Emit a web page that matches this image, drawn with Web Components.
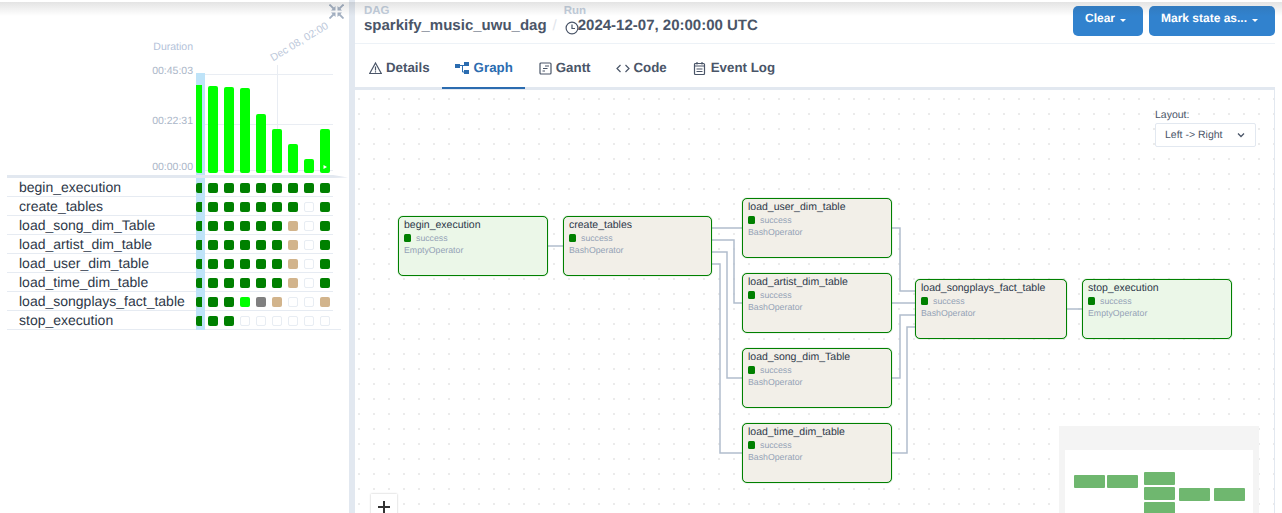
<!DOCTYPE html>
<html>
<head>
<meta charset="utf-8">
<style>
html, body { margin: 0; height: 513px; overflow: hidden; background: #fff; }
body { font-family: "Liberation Sans", Arial, sans-serif; color: #2d3748; text-rendering: geometricPrecision; }
</style>
</head>
<body>
<dag-page></dag-page>
<script>
const FONT = `"Liberation Sans", Arial, sans-serif`;

const tasks = [
  ["begin_execution", "g g g g g g g g"],
  ["create_tables", "g g g g g g e g"],
  ["load_song_dim_Table", "g g g g g t e g"],
  ["load_artist_dim_table", "g g g g g t e g"],
  ["load_user_dim_table", "g g g g g t e g"],
  ["load_time_dim_table", "g g g g g t e g"],
  ["load_songplays_fact_table", "g g l x t e e t"],
  ["stop_execution", "g g e e e e e e"],
];

const nodes = [
  ["begin_execution", "EmptyOperator", 398, 216, 150],
  ["create_tables", "BashOperator", 563, 216, 149],
  ["load_user_dim_table", "BashOperator", 742, 198, 150],
  ["load_artist_dim_table", "BashOperator", 742, 273, 150],
  ["load_song_dim_Table", "BashOperator", 742, 348, 150],
  ["load_time_dim_table", "BashOperator", 742, 423, 150],
  ["load_songplays_fact_table", "BashOperator", 915, 279, 152],
  ["stop_execution", "EmptyOperator", 1082, 279, 150],
];

const edges = [
  "M548 246H563",
  "M712 228H742",
  "M712 240H734V303H742",
  "M712 252H727V378H742",
  "M712 264H720V453H742",
  "M892 228H900V291H915",
  "M892 303H915",
  "M892 378H900V315H915",
  "M892 453H907V327H915",
  "M1067 309H1082",
];

class DurationChart extends HTMLElement {
  constructor() {
    super();
    this.attachShadow({ mode: "open" });
    const tops = [86, 87, 88, 114, 129, 144, 159, 129];
    const bars = tops
      .map((y, i) => `<rect x="${208 + i * 16}" y="${y}" width="10" height="${173 - y}" rx="2" fill="#00ff00"/>`)
      .join("");
    this.shadowRoot.innerHTML = `
      <style>
        :host { display: block; height: 178px; }
        svg { display: block; }
        text { font-family: ${FONT}; font-size: 10.5px; fill: #aab6c8; }
      </style>
      <svg width="349" height="178" viewBox="0 0 349 178">
        <rect x="196" y="73" width="9" height="105" fill="#bee3f8"/>
        <path d="M205 74.5H333M205 124.500H333M205 170.500H333M277.500 65V170" stroke="#e9edf3" stroke-width="1" fill="none"/>
        <text x="193" y="50" text-anchor="end" style="fill:#b3c2d9">Duration</text>
        <text x="193" y="74" text-anchor="end">00:45:03</text>
        <text x="193" y="124" text-anchor="end">00:22:31</text>
        <text x="193" y="170" text-anchor="end">00:00:00</text>
        <text transform="translate(273 61.500) rotate(-31)" style="font-size:10.500px;fill:#bcc8da">Dec 08, 02:00</text>
        <path d="M196 85h6v88h-4a2 2 0 0 1-2-2z" fill="#00ff00"/>
        ${bars}
        <path d="M323.500 165v4l3.500-2z" fill="#fff"/>
        <path d="M7 175H333L348 177.500L333 178H7z" fill="#e2e8f0"/>
      </svg>`;
  }
}

class TaskRow extends HTMLElement {
  constructor() {
    super();
    this.attachShadow({ mode: "open" });
    this.shadowRoot.innerHTML = `
      <style>
        :host { display: flex; box-sizing: border-box; height: 19px; width: 326px; border-bottom: 1px solid #e6ebf2; }
        .name { width: 177px; padding-left: 12px; font-size: 14px; line-height: 18px; color: #2d3748; white-space: nowrap; }
        .now { width: 9px; height: 19px; background: #bee3f8; overflow: hidden; flex: none; }
        .now i { display: block; width: 6px; height: 10px; margin-top: 5px; background: #008000; border-radius: 2px 0 0 2px; }
        .cells { display: flex; gap: 6px; margin-left: 3px; padding-top: 5px; }
        .cells i { box-sizing: border-box; display: block; width: 10px; height: 10px; border-radius: 2px; }
        .g { background: #008000; }
        .t { background: #d2b48c; }
        .l { background: #00ff00; }
        .x { background: #808080; }
        .e { background: #fff; border: 1px solid #e8edf3; }
      </style>
      <div class="name"></div>
      <div class="now"><i></i></div>
      <div class="cells"></div>`;
  }
  connectedCallback() {
    this.shadowRoot.querySelector(".name").textContent = this.getAttribute("name");
    this.shadowRoot.querySelector(".cells").innerHTML = this.getAttribute("states")
      .split(" ")
      .map((s) => `<i class="${s}"></i>`)
      .join("");
  }
}

class GridPanel extends HTMLElement {
  constructor() {
    super();
    this.attachShadow({ mode: "open" });
    this.shadowRoot.innerHTML = `
      <style>
        :host { display: block; width: 349px; flex: none; }
        .rows { margin-left: 7px; }
        task-row:last-child { width: 334px; }
        svg { position: absolute; left: 329px; top: 4px; }
      </style>
      <svg width="15" height="15" viewBox="0 0 15 15" fill="#a3b0c2" stroke="#a3b0c2">
        <path d="M6.500 6.500V2L2 6.500z" stroke="none"/><path d="M0.500 0.500L4.500 4.500" stroke-width="1.800"/>
        <path d="M8.500 6.500V2L13 6.500z" stroke="none"/><path d="M14.500 0.500L10.500 4.500" stroke-width="1.800"/>
        <path d="M6.500 8.500V13L2 8.500z" stroke="none"/><path d="M0.500 14.500L4.500 10.500" stroke-width="1.800"/>
        <path d="M8.500 8.500V13L13 8.500z" stroke="none"/><path d="M14.500 14.500L10.500 10.500" stroke-width="1.800"/>
      </svg>
      <duration-chart></duration-chart>
      <div class="rows"></div>`;
    this.shadowRoot.querySelector(".rows").innerHTML = tasks
      .map(([n, s]) => `<task-row name="${n}" states="${s}"></task-row>`)
      .join("");
  }
}

class DagHeader extends HTMLElement {
  constructor() {
    super();
    this.attachShadow({ mode: "open" });
    this.shadowRoot.innerHTML = `
      <style>
        :host { display: flex; box-sizing: border-box; height: 44px; padding: 4px 0 0 9px; border-bottom: 1px solid #edf2f7; justify-content: space-between; }
        .title { display: flex; }
        .label { font-size: 11.500px; font-weight: 700; line-height: 14px; color: #c3cedc; }
        .value { font-size: 15px; font-weight: 700; line-height: 15px; color: #4a5568; display: flex; align-items: flex-start; white-space: nowrap; }
        .sep { font-size: 15px; color: #dfe5ec; margin: 14px 7px 0 6px; line-height: 15px; }
        .value svg { margin: 3px -1px 0 1px; }
        .actions { display: flex; gap: 6px; padding-top: 2px; }
      </style>
      <div class="title">
        <div>
          <div class="label">DAG</div>
          <div class="value">sparkify_music_uwu_dag</div>
        </div>
        <div class="sep">/</div>
        <div>
          <div class="label">Run</div>
          <div class="value">
            <svg width="14" height="14" viewBox="0 0 14 14" fill="none" stroke="#4a5568" stroke-width="1.200"><circle cx="7" cy="7" r="5.900"/><path d="M7 3.500V7.500H10"/></svg>2024-12-07, 20:00:00 UTC
          </div>
        </div>
      </div>
      <div class="actions">
        <menu-button style="width:70px">Clear</menu-button>
        <menu-button style="width:126px">Mark state as...</menu-button>
      </div>`;
  }
}

class MenuButton extends HTMLElement {
  constructor() {
    super();
    this.attachShadow({ mode: "open" });
    this.shadowRoot.innerHTML = `
      <style>
        :host { display: flex; box-sizing: border-box; height: 30px; padding-right: 5px; background: #3182ce; border-radius: 5px; color: #fff; font-size: 12px; font-weight: 700; align-items: flex-start; justify-content: center; line-height: 25px; gap: 5px; }
        i { display: block; margin-top: 13px; border: 3px solid transparent; border-top-color: #fff; border-bottom: 0; }
      </style>
      <slot></slot><i></i>`;
  }
}

class TabItem extends HTMLElement {
  constructor() {
    super();
    this.attachShadow({ mode: "open" });
    this.shadowRoot.innerHTML = `
      <style>
        :host { display: flex; box-sizing: border-box; height: 45px; margin-bottom: -2px; padding: 3px 12px 0 13px; align-items: center; gap: 4px; font-size: 13.300px; font-weight: 700; color: #4a5568; border-bottom: 2px solid transparent; }
        :host([active]) { color: #2b6cb0; border-bottom-color: #2b6cb0; }
        ::slotted(svg) { display: block; margin-top: 2px; }
      </style>
      <slot name="icon"></slot><slot></slot>`;
  }
}

class TabBar extends HTMLElement {
  constructor() {
    super();
    this.attachShadow({ mode: "open" });
    this.shadowRoot.innerHTML = `
      <style>
        :host { display: flex; height: 43px; padding-left: 1px; border-bottom: 3px solid #e2e8f0; }
      </style>
      <slot></slot>`;
  }
}

class TaskNode extends HTMLElement {
  constructor() {
    super();
    this.attachShadow({ mode: "open" });
    this.shadowRoot.innerHTML = `
      <style>
        :host { display: block; position: absolute; box-sizing: border-box; height: 60px; padding: 2px 5px 0; border: 1px solid #008000; border-radius: 5px; box-shadow: 0 0 1px rgba(0,128,0,.7); background: #f2efe8; white-space: nowrap; }
        :host([empty]) { background: #ebf7e8; }
        .name { font-size: 10.500px; line-height: 13px; color: #2d3748; }
        .state { display: flex; align-items: center; gap: 5px; height: 12px; font-size: 8.750px; color: #94a2b6; }
        .state i { display: block; width: 7px; height: 8px; border-radius: 1.500px; background: #008000; }
        .op { font-size: 8.750px; line-height: 12px; color: #94a2b6; }
      </style>
      <div class="name"></div>
      <div class="state"><i></i><span>success</span></div>
      <div class="op"></div>`;
  }
  connectedCallback() {
    this.shadowRoot.querySelector(".name").textContent = this.getAttribute("name");
    this.shadowRoot.querySelector(".op").textContent = this.getAttribute("op");
  }
}

class LayoutSelect extends HTMLElement {
  constructor() {
    super();
    this.attachShadow({ mode: "open" });
    this.shadowRoot.innerHTML = `
      <style>
        :host { display: block; position: absolute; right: 18px; top: 19px; width: 101px; font-size: 10.500px; color: #4a5568; }
        .box { display: flex; box-sizing: border-box; height: 24px; margin-top: 2px; padding: 0 10px 0 9px; align-items: center; justify-content: space-between; background: #fff; border: 1px solid #e2e8f0; border-radius: 2px; }
      </style>
      <div>Layout:</div>
      <div class="box"><span>Left -&gt; Right</span>
        <svg width="8" height="6" viewBox="0 0 8 6" fill="none" stroke="#4a5568" stroke-width="1.300"><path d="M1 1.500L4 4.500L7 1.500"/></svg>
      </div>`;
  }
}

class MiniMap extends HTMLElement {
  constructor() {
    super();
    this.attachShadow({ mode: "open" });
    const boxes = [[1074, 475], [1107, 475], [1144, 472], [1144, 487], [1144, 502], [1179, 488], [1214, 488]];
    this.shadowRoot.innerHTML = `
      <style>
        :host { display: block; position: absolute; right: 15px; bottom: -60px; }
        svg { display: block; }
      </style>
      <svg width="200" height="147" viewBox="1059 426 200 147">
        <rect x="1059" y="426" width="200" height="147" fill="#f4f4f4"/>
        <rect x="1065" y="450" width="188" height="123" fill="#fff"/>
        ${boxes.map(([x, y]) => `<rect x="${x}" y="${y}" width="31" height="13" rx="1" fill="#6fb76f"/>`).join("")}
      </svg>`;
  }
}

class ZoomButton extends HTMLElement {
  constructor() {
    super();
    this.attachShadow({ mode: "open" });
    this.shadowRoot.innerHTML = `
      <style>
        :host { display: flex; position: absolute; left: 16px; top: 404px; box-sizing: border-box; width: 26px; height: 26px; align-items: center; justify-content: center; background: #fff; box-shadow: 0 0 2px rgba(0,0,0,.25); }
      </style>
      <svg width="12" height="12" viewBox="0 0 12 12" stroke="#333" stroke-width="2"><path d="M0 6H12M6 0V12"/></svg>`;
  }
}

class GraphCanvas extends HTMLElement {
  constructor() {
    super();
    this.attachShadow({ mode: "open" });
    const items = nodes
      .map(([n, op, x, y, w]) =>
        `<task-node name="${n}" op="${op}" ${op === "EmptyOperator" ? "empty" : ""} style="left:${x - 355}px;top:${y - 90}px;width:${w}px"></task-node>`)
      .join("");
    this.shadowRoot.innerHTML = `
      <style>
        :host { display: block; position: relative; flex: 1; overflow: hidden; border-right: 1px solid #e2e8f0;
          background-image: radial-gradient(circle at 1px 1px, #ebebeb 1px, transparent 1px);
          background-size: 15px 15px; background-position: 3px 8px; }
        svg.edges { position: absolute; left: 0; top: 0; }
      </style>
      <svg class="edges" width="920" height="423" viewBox="355 90 920 423" fill="none" stroke="#b1bdcd" stroke-width="1.500">
        ${edges.map((d) => `<path d="${d}"/>`).join("")}
      </svg>
      ${items}
      <layout-select></layout-select>
      <mini-map></mini-map>
      <zoom-button></zoom-button>`;
  }
}

class DagPage extends HTMLElement {
  constructor() {
    super();
    this.attachShadow({ mode: "open" });
    const ic = (w, body) => `<svg slot="icon" width="${w}" height="14" viewBox="0 0 ${w} 14" fill="none" stroke="#4a5568" stroke-width="1.200">${body}</svg>`;
    this.shadowRoot.innerHTML = `
      <style>
        :host { display: flex; position: relative; height: 513px; overflow: hidden; font-family: ${FONT}; }
        .divider { width: 6px; flex: none; background: #e2e8f0; }
        .main { display: flex; flex-direction: column; flex: none; width: 920px; }
        .shade { position: absolute; left: 0; right: 0; top: 2px; height: 14px; pointer-events: none; background: linear-gradient(rgba(60,60,60,.14), rgba(60,60,60,0)); }
      </style>
      <grid-panel></grid-panel>
      <div class="divider"></div>
      <div class="main">
        <dag-header></dag-header>
        <tab-bar>
          <tab-item>${ic(13, `<path d="M6.500 2L12.300 12.500H0.700z"/><path d="M6.500 5.500V9.500M6.500 10.200V11.500"/>`)}Details</tab-item>
          <tab-item active><svg slot="icon" width="15" height="14" viewBox="0 0 15 14" fill="#2b6cb0"><rect x="0" y="3" width="5" height="4"/><rect x="9" y="1" width="5" height="4"/><rect x="9" y="9" width="5" height="4"/><path d="M5 4.500H11M7.500 4.500V11H10" stroke="#2b6cb0" fill="none"/></svg>Graph</tab-item>
          <tab-item style="padding-left:14px">${ic(13, `<rect x="1" y="2" width="11" height="11" rx="1"/><path d="M6 5H10M4 7.500H8.500M3.500 10H6"/>`)}Gantt</tab-item>
          <tab-item>${ic(14, `<path d="M4.500 4L1 7.500L4.500 11M9.500 4L13 7.500L9.500 11"/>`)}Code</tab-item>
          <tab-item style="padding-left:14px;gap:5px">${ic(13, `<rect x="1.500" y="2.500" width="10" height="11" rx="1"/><path d="M4 1V3.500M9 1V3.500M1.500 5H11.500M3.500 8H9.500M3.500 10.500H9.500"/>`)}Event Log</tab-item>
        </tab-bar>
        <graph-canvas></graph-canvas>
      </div>
      <div class="shade"></div>`;
  }
}

customElements.define("duration-chart", DurationChart);
customElements.define("task-row", TaskRow);
customElements.define("grid-panel", GridPanel);
customElements.define("menu-button", MenuButton);
customElements.define("dag-header", DagHeader);
customElements.define("tab-item", TabItem);
customElements.define("tab-bar", TabBar);
customElements.define("task-node", TaskNode);
customElements.define("layout-select", LayoutSelect);
customElements.define("mini-map", MiniMap);
customElements.define("zoom-button", ZoomButton);
customElements.define("graph-canvas", GraphCanvas);
customElements.define("dag-page", DagPage);
</script>
</body>
</html>
